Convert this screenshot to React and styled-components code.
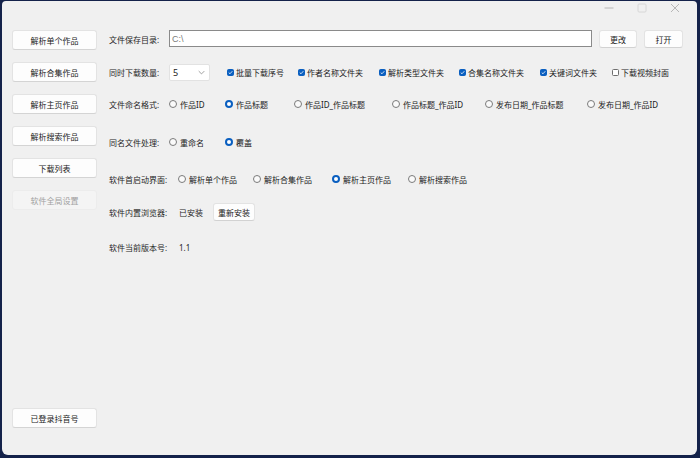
import React from 'react';
import styled, { createGlobalStyle } from 'styled-components';

const Global = createGlobalStyle`
  html, body {
    margin: 0;
    padding: 0;
    background: #14224a;
    font-family: "Noto Sans", "Noto Sans CJK SC", sans-serif;
  }
  * { box-sizing: border-box; }
`;

const Win = styled.div`
  margin: 1px 3px 0 2px;
  height: 454px;
  background: #f0f0f0;
  border-radius: 4px 4px 6px 6px;
  display: flex;
  flex-direction: column;
  color: #1a1a1a;
  font-size: 8px;
  overflow: hidden;
`;

const TitleBar = styled.div`
  height: 29px;
  display: flex;
  justify-content: flex-end;
  align-items: flex-start;
  padding-right: 6px;
`;

const Caption = styled.div`
  width: 33px;
  height: 14px;
  display: flex;
  align-items: center;
  justify-content: center;
  color: #a8a8a8;
`;

const Body = styled.div`
  flex: 1;
  display: flex;
`;

const Sidebar = styled.div`
  width: 95px;
  padding: 0 0 27px 10px;
  display: flex;
  flex-direction: column;
  gap: 12px;
`;

const SideButton = styled.div`
  width: 85px;
  height: 20px;
  display: flex;
  align-items: center;
  justify-content: center;
  background: ${(p) => (p.$disabled ? '#f4f4f4' : '#fdfdfd')};
  color: ${(p) => (p.$disabled ? '#a0a0a0' : '#1a1a1a')};
  border: 1px solid ${(p) => (p.$disabled ? '#ececec' : '#e3e3e3')};
  border-bottom-color: ${(p) => (p.$disabled ? '#ececec' : '#d4d4d4')};
  border-radius: 3px;
  margin-top: ${(p) => (p.$bottom ? 'auto' : '0')};
`;

const Main = styled.div`
  flex: 1;
  padding: 0 14px 0 12px;
  display: flex;
  flex-direction: column;
`;

const Row = styled.div`
  height: 18px;
  margin-top: ${(p) => p.$top || 0}px;
  display: flex;
  align-items: center;
`;

const Label = styled.div`
  width: ${(p) => p.$w || 60}px;
  flex-shrink: 0;
  color: #262626;
`;

const PathInput = styled.div`
  flex: 1;
  height: 17px;
  align-self: flex-start;
  background: #fff;
  border: 1px solid #8a8a8a;
  display: flex;
  align-items: center;
  padding-left: 2px;
  color: #7a7a7a;
  font-size: 9px;
  font-family: "Liberation Sans", sans-serif;
`;

const SmallButton = styled.div`
  width: ${(p) => p.$w}px;
  height: 18px;
  margin-left: ${(p) => p.$ml || 0}px;
  display: flex;
  align-items: center;
  justify-content: center;
  background: #fdfdfd;
  border: 1px solid #e3e3e3;
  border-bottom-color: #d2d2d2;
  border-radius: 3px;
  color: #1a1a1a;
`;

const Select = styled.div`
  width: 41px;
  height: 17px;
  background: #fff;
  border: 1px solid #e2e2e2;
  border-radius: 2px;
  display: flex;
  align-items: center;
  justify-content: space-between;
  padding: 0 4px 0 3px;
  margin-right: 17px;
  font-size: 9px;
`;

const Option = styled.div`
  width: ${(p) => (p.$w ? `${p.$w}px` : 'auto')};
  flex-shrink: 0;
  display: flex;
  align-items: center;
  gap: ${(p) => p.$gap || 2}px;
  white-space: nowrap;
`;

const Box = styled.span`
  width: 7px;
  height: 7px;
  border-radius: 1.5px;
  display: inline-flex;
  align-items: center;
  justify-content: center;
  background: ${(p) => (p.$on ? '#0a5fc0' : '#fff')};
  border: 1px solid ${(p) => (p.$on ? '#0a5fc0' : '#6e6e6e')};
`;

const Dot = styled.span`
  width: 8px;
  height: 8px;
  border-radius: 50%;
  display: inline-block;
  background: ${(p) => (p.$on ? '#fff' : '#fafafa')};
  border: ${(p) => (p.$on ? '2.5px solid #0a5fc0' : '1px solid #7a7a7a')};
`;

const Value = styled.div`
  color: #262626;
  margin-right: 10px;
`;

function Check({ on, label, w }) {
  return (
    <Option $w={w}>
      <Box $on={on}>
        {on && (
          <svg width="5" height="5" viewBox="0 0 10 10">
            <path d="M1.5 5.2 L4 7.6 L8.6 2.4" fill="none" stroke="#fff" strokeWidth="1.6" />
          </svg>
        )}
      </Box>
      {label}
    </Option>
  );
}

function Radio({ on, label, w }) {
  return (
    <Option $w={w} $gap={3}>
      <Dot $on={on} />
      {label}
    </Option>
  );
}

const sideItems = ['解析单个作品', '解析合集作品', '解析主页作品', '解析搜索作品', '下载列表'];

export default function App() {
  return (
    <>
      <Global />
      <Win>
        <TitleBar>
          <Caption>
            <svg width="10" height="10" viewBox="0 0 10 10">
              <path d="M0.5 5 H9.5" stroke="currentColor" strokeWidth="0.8" />
            </svg>
          </Caption>
          <Caption>
            <svg width="10" height="10" viewBox="0 0 10 10">
              <rect x="1" y="1" width="8" height="8" rx="1" fill="none" stroke="#d0d0d0" strokeWidth="0.8" />
            </svg>
          </Caption>
          <Caption>
            <svg width="10" height="10" viewBox="0 0 10 10">
              <path d="M1 1 L9 9 M9 1 L1 9" stroke="currentColor" strokeWidth="0.8" />
            </svg>
          </Caption>
        </TitleBar>
        <Body>
          <Sidebar>
            {sideItems.map((s) => (
              <SideButton key={s}>{s}</SideButton>
            ))}
            <SideButton $disabled>软件全局设置</SideButton>
            <SideButton $bottom>已登录抖音号</SideButton>
          </Sidebar>
          <Main>
            <Row>
              <Label>文件保存目录:</Label>
              <PathInput>C:\</PathInput>
              <SmallButton $w={38} $ml={7}>更改</SmallButton>
              <SmallButton $w={39} $ml={7}>打开</SmallButton>
            </Row>
            <Row $top={15}>
              <Label>同时下载数量:</Label>
              <Select>
                <span>5</span>
                <svg width="7" height="5" viewBox="0 0 10 6">
                  <path d="M1 1 L5 5 L9 1" fill="none" stroke="#777" strokeWidth="1" />
                </svg>
              </Select>
              <Check on w={71} label="批量下载序号" />
              <Check on w={81} label="作者名称文件夹" />
              <Check on w={80} label="解析类型文件夹" />
              <Check on w={81} label="合集名称文件夹" />
              <Check on w={72} label="关键词文件夹" />
              <Check label="下载视频封面" />
            </Row>
            <Row $top={14}>
              <Label>文件命名格式:</Label>
              <Radio w={56} label="作品ID" />
              <Radio on w={69} label="作品标题" />
              <Radio w={98} label="作品ID_作品标题" />
              <Radio w={93} label="作品标题_作品ID" />
              <Radio w={102} label="发布日期_作品标题" />
              <Radio label="发布日期_作品ID" />
            </Row>
            <Row $top={20}>
              <Label>同名文件处理:</Label>
              <Radio w={56} label="重命名" />
              <Radio on label="覆盖" />
            </Row>
            <Row $top={19}>
              <Label $w={69}>软件首启动界面:</Label>
              <Radio w={75} label="解析单个作品" />
              <Radio w={79} label="解析合集作品" />
              <Radio on w={76} label="解析主页作品" />
              <Radio label="解析搜索作品" />
            </Row>
            <Row $top={15}>
              <Label $w={70}>软件内置浏览器:</Label>
              <Value>已安装</Value>
              <SmallButton $w={42}>重新安装</SmallButton>
            </Row>
            <Row $top={17}>
              <Label $w={70}>软件当前版本号:</Label>
              <Value>1.1</Value>
            </Row>
          </Main>
        </Body>
      </Win>
    </>
  );
}
